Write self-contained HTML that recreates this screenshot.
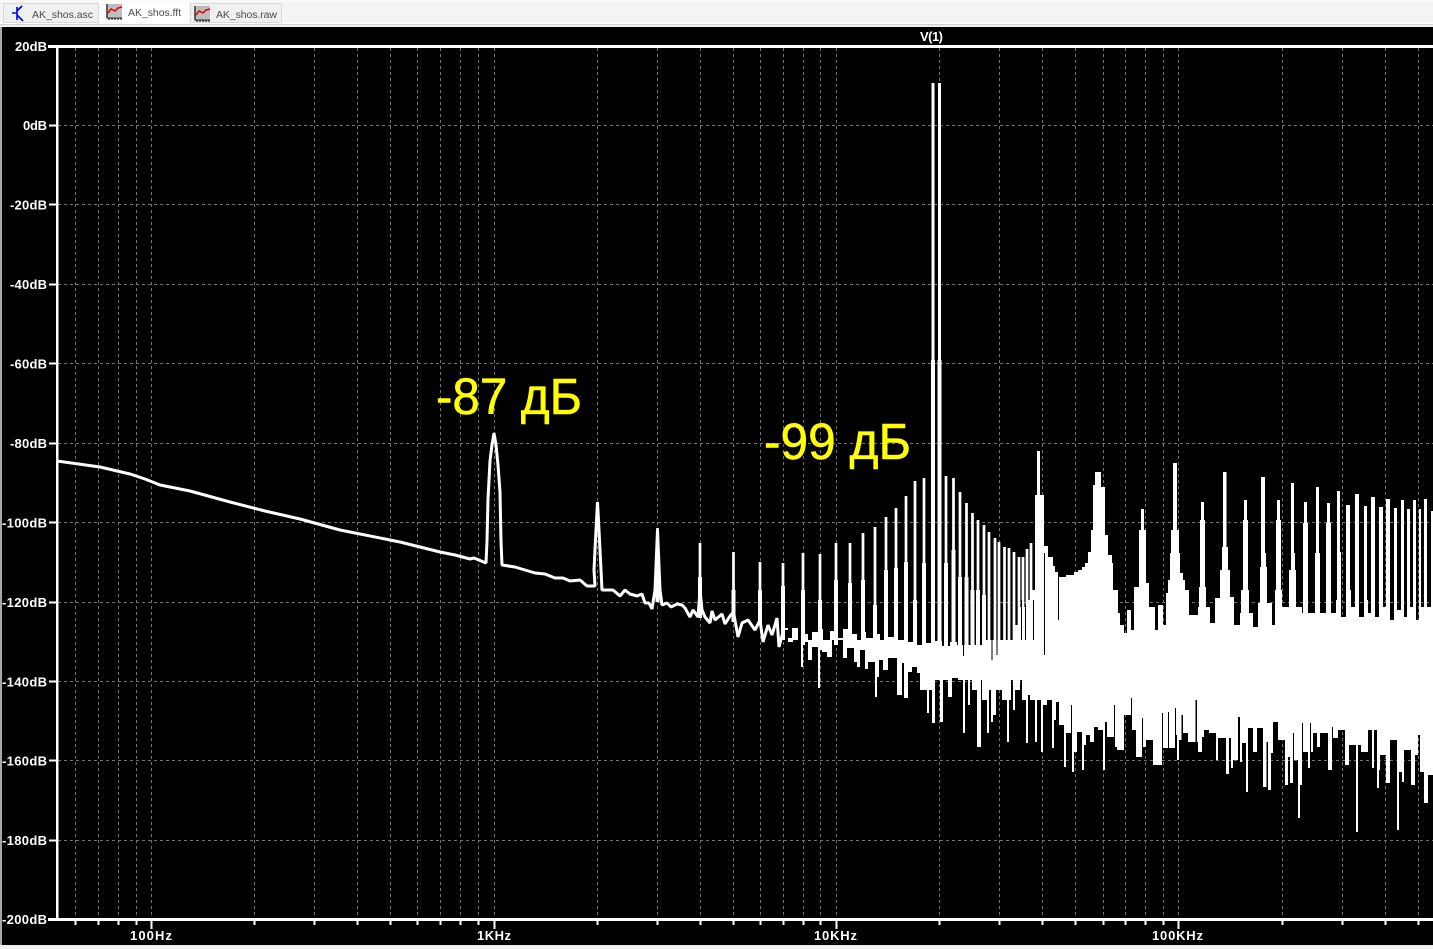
<!DOCTYPE html>
<html><head><meta charset="utf-8"><title>AK_shos.fft</title>
<style>html,body{margin:0;padding:0;background:#000;width:1433px;height:949px;overflow:hidden}svg{display:block}
.a{font:bold 13px "Liberation Sans",sans-serif;fill:#fff}
.t{font:10.5px "Liberation Sans",sans-serif;fill:#4a4a4a}
.y{font:51px "Liberation Sans",sans-serif;fill:#ff0;stroke:#ff0;stroke-width:.6}</style></head>
<body>
<svg width="1433" height="949" viewBox="0 0 1433 949" xmlns="http://www.w3.org/2000/svg">
<rect width="1433" height="949" fill="#000"/>
<!-- chrome -->
<rect width="1433" height="27" fill="#f4f4f4"/>
<rect y="0" width="1433" height="2" fill="#fafafa"/>
<rect y="22" width="1433" height="2" fill="#fff"/>
<rect y="24" width="1433" height="1" fill="#cfcfcf"/>
<rect y="25" width="1433" height="2" fill="#f0f0f0"/>
<rect x="0" y="27" width="2" height="919" fill="#a8a8a8"/>
<rect y="945" width="1433" height="4" fill="#f0f0f0"/>
<rect x="3.500" y="3.500" width="95" height="19" fill="#f0f0f0" stroke="#d9d9d9"/>
<rect x="190.500" y="3.500" width="91" height="19" fill="#f0f0f0" stroke="#d9d9d9"/>
<rect x="99" y="1" width="90" height="23" fill="#fff"/>
<!-- tab icons -->
<path d="M12 13H17M17 7V20M17 11L22 6M17 15L23 21" stroke="#0000e0" stroke-width="1.600" fill="none"/>
<rect x="106" y="4" width="16" height="13" fill="#bdbdbd"/>
<path d="M107 4V18H122M109 18V20M112 18V20M115 18V20M118 18V20M121 18V20" stroke="#000" fill="none"/>
<path d="M108 13L111 9L115 11L118 8L122 7" stroke="#e00000" stroke-width="1.500" fill="none"/>
<rect x="194" y="6" width="16" height="13" fill="#bdbdbd"/>
<path d="M195 6V20H210M197 20V22M200 20V22M203 20V22M206 20V22M209 20V22" stroke="#000" fill="none"/>
<path d="M196 15L199 11L203 13L206 10L210 9" stroke="#e00000" stroke-width="1.500" fill="none"/>
<text class="t" x="32" y="18" textLength="61">AK_shos.asc</text>
<text class="t" x="128" y="16" textLength="53">AK_shos.fft</text>
<text class="t" x="216" y="18" textLength="61">AK_shos.raw</text>
<!-- grid -->
<path stroke="#727272" stroke-width="1" stroke-dasharray="3 3" fill="none" shape-rendering="crispEdges" d="M58 125.500H1433M58 204.500H1433M58 284.500H1433M58 363.500H1433M58 443.500H1433M58 522.500H1433M58 602.500H1433M58 681.500H1433M58 760.500H1433M58 840.500H1433
M75.500 48V918M98.500 48V918M118.500 48V918M136.500 48V918M151.500 48V918M254.500 48V918M314.500 48V918M357.500 48V918M390.500 48V918M417.500 48V918M440.500 48V918M460.500 48V918M478.500 48V918M494.500 48V918M597.500 48V918M657.500 48V918M700.500 48V918M733.500 48V918M760.500 48V918M783.500 48V918M803.500 48V918M820.500 48V918M836.500 48V918M939.500 48V918M999.500 48V918M1042.500 48V918M1075.500 48V918M1103.500 48V918M1125.500 48V918M1145.500 48V918M1163.500 48V918M1178.500 48V918M1282.500 48V918M1342.500 48V918M1385.500 48V918M1418.500 48V918"/>
<!-- axes -->
<rect x="48" y="45" width="1385" height="3" fill="#fff"/>
<rect x="48" y="918" width="1385" height="3" fill="#fff"/>
<rect x="56" y="45" width="2.500" height="875" fill="#fff"/>
<path stroke="#fff" stroke-width="2" d="M49 125.500H57M49 204.500H57M49 284.500H57M49 363.500H57M49 443.500H57M49 522.500H57M49 602.500H57M49 681.500H57M49 760.500H57M49 840.500H57"/>
<path stroke="#fff" stroke-width="2" d="M75.500 920V925M98.500 920V925M118.500 920V925M136.500 920V925M254.500 920V925M314.500 920V925M357.500 920V925M390.500 920V925M417.500 920V925M440.500 920V925M460.500 920V925M478.500 920V925M597.500 920V925M657.500 920V925M700.500 920V925M733.500 920V925M760.500 920V925M783.500 920V925M803.500 920V925M820.500 920V925M939.500 920V925M999.500 920V925M1042.500 920V925M1075.500 920V925M1103.500 920V925M1125.500 920V925M1145.500 920V925M1163.500 920V925M1282.500 920V925M1342.500 920V925M1385.500 920V925M1418.500 920V925M151.500 920V929M494.500 920V929M836.500 920V929M1178.500 920V929"/>
<!-- axis labels -->
<text class="a" x="15" y="51" textLength="32">20dB</text>
<text class="a" x="23" y="130" textLength="24">0dB</text>
<text class="a" x="10" y="209.500" textLength="37">-20dB</text>
<text class="a" x="10" y="289" textLength="37">-40dB</text>
<text class="a" x="10" y="368.500" textLength="37">-60dB</text>
<text class="a" x="10" y="448" textLength="37">-80dB</text>
<text class="a" x="2" y="527.500" textLength="45">-100dB</text>
<text class="a" x="2" y="607" textLength="45">-120dB</text>
<text class="a" x="2" y="686.500" textLength="45">-140dB</text>
<text class="a" x="2" y="765.500" textLength="45">-160dB</text>
<text class="a" x="2" y="845" textLength="45">-180dB</text>
<text class="a" x="2" y="924" textLength="45">-200dB</text>
<text class="a" x="130" y="940" textLength="42">100Hz</text>
<text class="a" x="477" y="940" textLength="34">1KHz</text>
<text class="a" x="814" y="940" textLength="43">10KHz</text>
<text class="a" x="1152" y="940" textLength="51">100KHz</text>
<text class="a" x="920" y="41" textLength="23">V(1)</text>
<!-- low frequency trace -->
<polyline fill="none" stroke="#fff" stroke-width="3" stroke-linejoin="bevel" points="57,461 100,467 130,474 145,479 160,485 190,491 230,502 265,511 300,519 340,530 400,542 440,552 455,555 470,559 474,558 486,563 487,541 488,499 490,461 492,445 494,433 496,445 498,465 500,492 501,541 502,565 515,567 525,570 535,573 545,574 555,578 563,578 570,581 580,580 587,586 595,586 594,570 596,530 597.500,502 599,530 601,570 602,590 613,590 620,596 625,590 630,594 637,596 642,594 645,603 649,603 652,609 655,590 657.500,530 660,590 662,605 667,603 671,607 677,604 682,605 685,608 690,617 693,610 698,617 700,590 702,610 705,617 710,623 712,611 715,620 722,614 725,624 730,616 733.500,612 738,637 742,623 748,620 755,630 760,620 763,642 768,625 772,635 777,618 779,647 783,632"/>
<!-- harmonic spikes -->
<path fill="none" stroke="#fff" stroke-width="2.700" d="M657.500 528V600M700 543V617M733.500 552V620M760 562V625M783 563V640M803 553V640M820 554V640M836 543V640M850 543V640M863 533V640M875 527V640M886 517V640M896 508V640M906 496V640M915 481V640M924 478V640M946 476V640M953.500 478V640M960 492V640M966.500 503V640M972.500 513V640M978 520V640M984 525V640M989 532V640M995 538V640M999 542V640M1004.500 547V640M1009 548V640M1014 552V640M1019 557V640M1023 557V620M1027 549V620M1031 543V610"/>
<path fill="none" stroke="#fff" stroke-width="3" d="M933 83V640M939.500 83V640"/>
<path fill="none" stroke="#fff" stroke-width="4" d="M657.500 563V602M700 577V618M733.500 590V622M760 590V625M783 586V640M803 590V645M820 600V650M836 580V645M850 583V645M863 580V645M875 605V650M886 570V648M896 568V648M906 562V648M915 600V650M924 563V648M933 360V650M939.500 360V650M946 563V650M953.500 550V650M960 577V650M966.500 577V650M972.500 590V650M978 590V650M984 595V650"/>
<!-- main noise body -->
<path fill="#fff" d="M782 648V628H788V638H792V628H798V640H803V634H808V640H812V632H818V629H823V640H830V631H838V638H843V629H851V634H857V640H862V632H866V638H875V634H880V640H885V637H895V640H905V642H915V645H925V643H935V641H942V646H950V642H957V645H985V640H1015V625H1020V607H1027V600H1032V590H1035V495H1037V451H1040V495H1044V546H1048V557H1053V566H1055V572H1058V577H1066V575H1074V572H1078V570H1082V567H1085V563H1088V552H1091V530H1093V485H1095V472H1101V487H1105V535H1108V555H1112V563H1113V590H1118V613H1120V625H1124V633H1127V610H1131V630H1134V587H1139V530H1141V509H1144V530H1146V583H1149V607H1155V630H1158V605H1163V625H1166V593H1168V580H1170V553H1171V530H1173V463H1177V530H1179V553H1180V573H1183V580H1185V590H1189V615H1198V607H1199V587H1200V520H1201V502H1204V520H1205V587H1206V607H1210V623H1215V598H1220V570H1222V547H1223V472H1226.500V547H1228V570H1230V597H1234V625H1240V613H1241V590H1243V520H1244V500H1247V520H1248V590H1249V613H1253V627H1258V603H1260V567H1261V477H1265V553H1266V567H1267V603H1272V625H1275V590H1276V520H1277V500H1280V520H1281V590H1282V607H1289V570H1291V483H1294V553H1295V570H1296V607H1302V613H1303V523H1304V502H1307V523H1308V613H1315V553H1316V487H1319V553H1320V613H1326V523H1327V503H1330V523H1331V613H1336V600H1337V491H1340V552H1341V617H1346V505H1350V590H1351V607H1355V494H1359V617H1364V506H1367V600H1368V613H1371V497H1375V617H1379V507H1383V607H1386V499H1390V620H1394V508H1397V610H1401V500H1404V617H1407V509H1410V607H1413V500H1416V620H1419V509H1421V607H1424V499H1427V607H1431V511H1433V775H1428V803H1424V772H1420V735H1418V755H1415V785H1411V750H1404V782H1402V772H1399V830H1397V740H1390V783H1386V755H1380V770H1379V788H1377V730H1374V768H1372V730H1368V752H1361V745H1358V832H1356V745H1349V765H1345V730H1338V738H1333V727H1332V770H1328V733H1320V747H1317V733H1313V752H1311V723H1310V768H1308V752H1303V723H1302V785H1300V818H1298V760H1294V733H1293V783H1290V757H1288V785H1285V740H1278V722H1273V753H1271V790H1268V742H1266.500V787H1263V728H1257V752H1253V728H1248V792H1246V743H1242V762H1240V717H1238V760H1233V768H1231V738H1229V774H1226V738H1218V760H1216V733H1209V730H1204V737H1202V752H1198V742H1197V700H1195.500V742H1188V733H1183V715H1181.500V740H1179V760H1177V735H1176V708H1175V748H1169V712H1168V748H1163V713H1162V765H1153V740H1146V747H1143V718H1142V757H1136V730H1132V698H1131V715H1124V750H1117V747H1115V705H1114V737H1107V722H1105V770H1103V730H1098V727H1094V742H1090V735H1086V745H1084V770H1082V732H1077V752H1074V772H1072V705H1071V733H1066V767H1064V725H1059V702H1056V720H1054V748H1052V700H1047V705H1043V752H1041V700H1037V742H1035V700H1030V695H1028V743H1026V700H1022V680H1020V690H1015V710H1013V680H1011V700H1009V742H1007V700H1002V690H996V715H993V722H991V690H989V733H987V700H982V680H981V747H977V690H972V680H970V705H968V680H965V733H963V680H958V678H952V697H948V680H943V722H940V680H935V723H932V690H929V713H927V690H920V673H917V667H912V672H908V698H904V663H902V695H897V658H888V670H883V660H879V677H877V697H875V662H868V669H865V650H860V667H857V662H854V648H847V658H843V640H838V645H835V640H832V657H827V652H822V647H820V688H818V647H812V660H808V642H803V667H801V640H793V642H788V630H782Z"/>
<!-- dark slits inside the body -->
<path fill="none" stroke="#000" stroke-width="1" d="M1044.500 553V655M1058.500 572V620M1021.500 600V640M1025.500 605V640M1033.500 600V640M992 620V660M997 620V655M963.500 620V656"/>
<!-- annotations -->
<text class="y" x="436" y="414" textLength="146" lengthAdjust="spacingAndGlyphs">-87 дБ</text>
<text class="y" x="764" y="459" textLength="147" lengthAdjust="spacingAndGlyphs">-99 дБ</text>
</svg>
</body></html>
